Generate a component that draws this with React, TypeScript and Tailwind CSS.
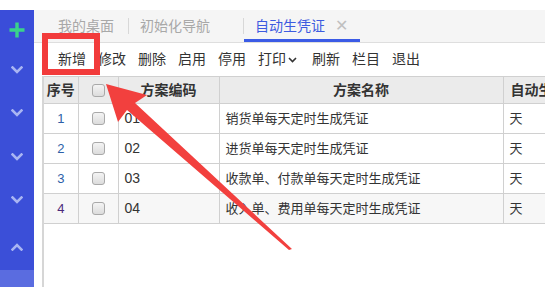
import React from "react";

const font = { fontFamily: '"Liberation Sans", "Noto Sans CJK SC", sans-serif' };

function ChevronDown({ up = false }: { up?: boolean }) {
  return (
    <svg width="12" height="8" viewBox="0 0 12 8" className={up ? "rotate-180" : ""}>
      <path d="M1.5 1.5 L6 6 L10.5 1.5" fill="none" stroke="#a9b5f2" strokeWidth="2.6" strokeLinecap="square" />
    </svg>
  );
}

function Checkbox() {
  return <div className="w-[13px] h-[13px] rounded-[3px] border border-[#a9a9a9] bg-gradient-to-b from-[#f4f4f4] to-[#dcdcdc]" />;
}

const rows = [
  { n: "1", code: "01", name: "销货单每天定时生成凭证", c: "text-[#2d5fa8]" },
  { n: "2", code: "02", name: "进货单每天定时生成凭证", c: "text-[#2d5fa8]" },
  { n: "3", code: "03", name: "收款单、付款单每天定时生成凭证", c: "text-[#2d5fa8]" },
  { n: "4", code: "04", name: "收入单、费用单每天定时生成凭证", c: "text-[#4b2a7a]" },
];

export default function App() {
  const tools = ["新增", "修改", "删除", "启用", "停用"];
  return (
    <div className="relative w-[545px] h-[287px] overflow-hidden bg-white flex flex-col" style={font}>
      <div className="h-[10px] bg-white shrink-0" />
      <div className="flex flex-1 min-h-0">
        {/* sidebar */}
        <div className="w-[34px] bg-[#3b4fd8] flex flex-col items-center shrink-0">
          <div className="h-[40px] w-full flex items-center justify-center bg-[#3a4dd9]">
            <svg width="18" height="18" viewBox="0 0 18 18">
              <path d="M9 1.5 V16.5 M1.5 9 H16.5" stroke="#3ad38a" strokeWidth="3.4" />
            </svg>
          </div>
          <div className="flex flex-col items-center w-full flex-1">
            <div className="h-[16px]" />
            <ChevronDown />
            <div className="h-[35px]" />
            <ChevronDown />
            <div className="h-[36px]" />
            <ChevronDown />
            <div className="h-[35px]" />
            <ChevronDown />
            <div className="h-[39px]" />
            <ChevronDown up />
            <div className="flex-1" />
            <div className="h-[17px] w-full bg-[#5a6ce0]" />
          </div>
        </div>
        {/* main */}
        <div className="flex-1 flex flex-col min-w-0">
          <div className="h-[33px] bg-[#f5f5f5] border-b border-[#dedede] flex items-stretch text-[14px] shrink-0">
            <div className="w-[24px]" />
            <div className="flex items-center text-[#a8a8a8] pr-[14px]">我的桌面</div>
            <div className="flex items-center"><div className="w-px h-[16px] bg-[#d8d8d8]" /></div>
            <div className="flex items-center text-[#a8a8a8] px-[11px] mr-[22px]">初始化导航</div>
            <div className="flex items-center"><div className="w-px h-[16px] bg-[#d8d8d8]" /></div>
            <div className="relative flex items-center pl-[11px] pr-[12px] text-[#3d5be0]">
              <span>自动生凭证</span>
              <span className="ml-[10px] text-[#c0c0c0] text-[16px] leading-none">✕</span>
              <div className="absolute left-0 right-0 bottom-[0px] h-[3px] bg-[#3b5be6]" />
            </div>
          </div>
          <div className="h-[33px] bg-white flex items-center text-[14px] text-[#333] pl-[24px] gap-[12px] shrink-0">
            {tools.map((t) => (
              <span key={t}>{t}</span>
            ))}
            <span className="flex items-center gap-[2px]">
              打印
              <svg width="9" height="6" viewBox="0 0 9 6"><path d="M1 1 L4.5 4.5 L8 1" fill="none" stroke="#333" strokeWidth="1.6" /></svg>
            </span>
            <span className="ml-[3px]">刷新</span>
            <span>栏目</span>
            <span>退出</span>
          </div>
          <div className="flex-1 ml-[8px] border-l-2 border-[#d6d6d6] min-h-0">
            <table className="border-collapse text-[13px] text-[#333] w-[520px] table-fixed">
              <colgroup>
                <col className="w-[34px]" />
                <col className="w-[40px]" />
                <col className="w-[101px]" />
                <col className="w-[284px]" />
                <col className="w-[61px]" />
              </colgroup>
              <thead>
                <tr className="h-[27px] bg-[#ebebeb] font-bold text-[14px]">
                  <th className="border border-l-0 border-[#d0d0d0] font-bold">序号</th>
                  <th className="border border-[#d0d0d0]"><div className="flex justify-center"><Checkbox /></div></th>
                  <th className="border border-[#d0d0d0] font-bold">方案编码</th>
                  <th className="border border-[#d0d0d0] font-bold">方案名称</th>
                  <th className="border border-[#d0d0d0] font-bold text-left pl-[7px] whitespace-nowrap overflow-hidden">自动生成</th>
                </tr>
              </thead>
              <tbody>
                {rows.map((r, i) => (
                  <tr key={r.n} className={`h-[30px] ${i === 3 ? "bg-[#f7f7f7]" : "bg-white"}`}>
                    <td className={`border border-l-0 border-[#d0d0d0] text-center text-[13px] ${r.c}`}>{r.n}</td>
                    <td className="border border-[#d0d0d0]"><div className="flex justify-center"><Checkbox /></div></td>
                    <td className="border border-[#d0d0d0] pl-[6px] text-[14px]">{r.code}</td>
                    <td className="border border-[#d0d0d0] pl-[6px] text-[13px] whitespace-nowrap">{r.name}</td>
                    <td className="border border-[#d0d0d0] pl-[6px] text-[13px]">天</td>
                  </tr>
                ))}
              </tbody>
            </table>
          </div>
        </div>
      </div>
      {/* annotations */}
      <div className="absolute left-[42px] top-[33px] w-[58px] h-[42px] border-[6px] border-[#f23b3b] pointer-events-none" />
      <svg className="absolute left-0 top-0 pointer-events-none" width="545" height="287" viewBox="0 0 545 287">
        <polygon points="106,84 147,95 135,103 292,249 289,250 127,110 118,122" fill="#f2403e" />
      </svg>
    </div>
  );
}
